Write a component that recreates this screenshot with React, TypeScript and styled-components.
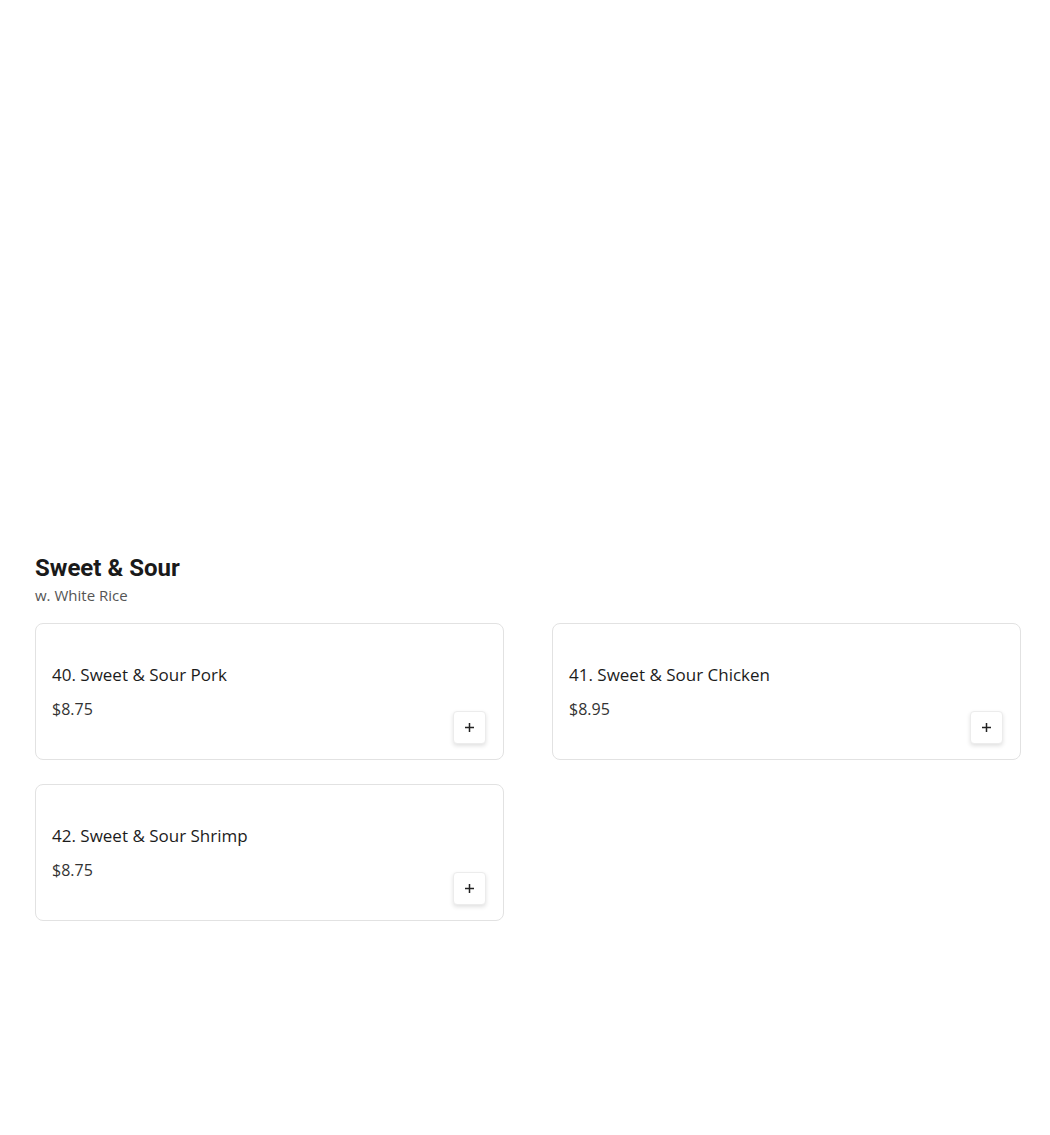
import styled, { createGlobalStyle } from 'styled-components'

const GlobalStyle = createGlobalStyle`
  body {
    margin: 0;
    background: #fff;
    font-family: 'Open Sans', 'Liberation Sans', sans-serif;
  }
`

const Page = styled.div`
  width: 1050px;
  min-height: 1135px;
  box-sizing: border-box;
  padding: 553px 29px 0 35px;
`

const Section = styled.section`
  display: flex;
  flex-direction: column;
`

const Title = styled.h2`
  margin: 0;
  font-family: Roboto, 'Liberation Sans', sans-serif;
  font-weight: 700;
  font-size: 24px;
  line-height: 30px;
  color: #1a1a1a;
`

const Subtitle = styled.div`
  margin-top: 2px;
  font-size: 15px;
  line-height: 20px;
  color: #555;
`

const Grid = styled.div`
  margin-top: 18px;
  display: grid;
  grid-template-columns: 1fr 1fr;
  column-gap: 48px;
  row-gap: 24px;
`

const Card = styled.div`
  box-sizing: border-box;
  height: 137px;
  border: 1px solid #e2e2e2;
  border-radius: 8px;
  padding: 39px 17px 16px 16px;
  display: flex;
  flex-direction: column;
`

const ItemName = styled.div`
  font-size: 17px;
  line-height: 24px;
  font-weight: 500;
  color: #1c1c1c;
`

const Bottom = styled.div`
  margin-top: 10px;
  display: flex;
  justify-content: space-between;
  align-items: flex-start;
`

const Price = styled.div`
  font-size: 16px;
  line-height: 24px;
  color: #333;
`

const AddButton = styled.button`
  margin-top: 14px;
  width: 33px;
  height: 33px;
  padding: 0;
  border: 1px solid #ececec;
  border-radius: 4px;
  background: #fff;
  box-shadow: 0 2px 4px rgba(0, 0, 0, 0.12);
  display: flex;
  align-items: center;
  justify-content: center;
  color: #222;
`

const items = [
  { name: '40. Sweet & Sour Pork', price: '$8.75' },
  { name: '41. Sweet & Sour Chicken', price: '$8.95' },
  { name: '42. Sweet & Sour Shrimp', price: '$8.75' },
]

const PlusIcon = () => (
  <svg width='11' height='11' viewBox='0 0 11 11' fill='none'>
    <path d='M5.5 1v9M1 5.5h9' stroke='currentColor' strokeWidth='1.5' />
  </svg>
)

export default function App() {
  return (
    <>
      <GlobalStyle />
      <Page>
        <Section>
          <Title>Sweet &amp; Sour</Title>
          <Subtitle>w. White Rice</Subtitle>
          <Grid>
            {items.map((item) => (
              <Card key={item.name}>
                <ItemName>{item.name}</ItemName>
                <Bottom>
                  <Price>{item.price}</Price>
                  <AddButton aria-label='Add'>
                    <PlusIcon />
                  </AddButton>
                </Bottom>
              </Card>
            ))}
          </Grid>
        </Section>
      </Page>
    </>
  )
}
